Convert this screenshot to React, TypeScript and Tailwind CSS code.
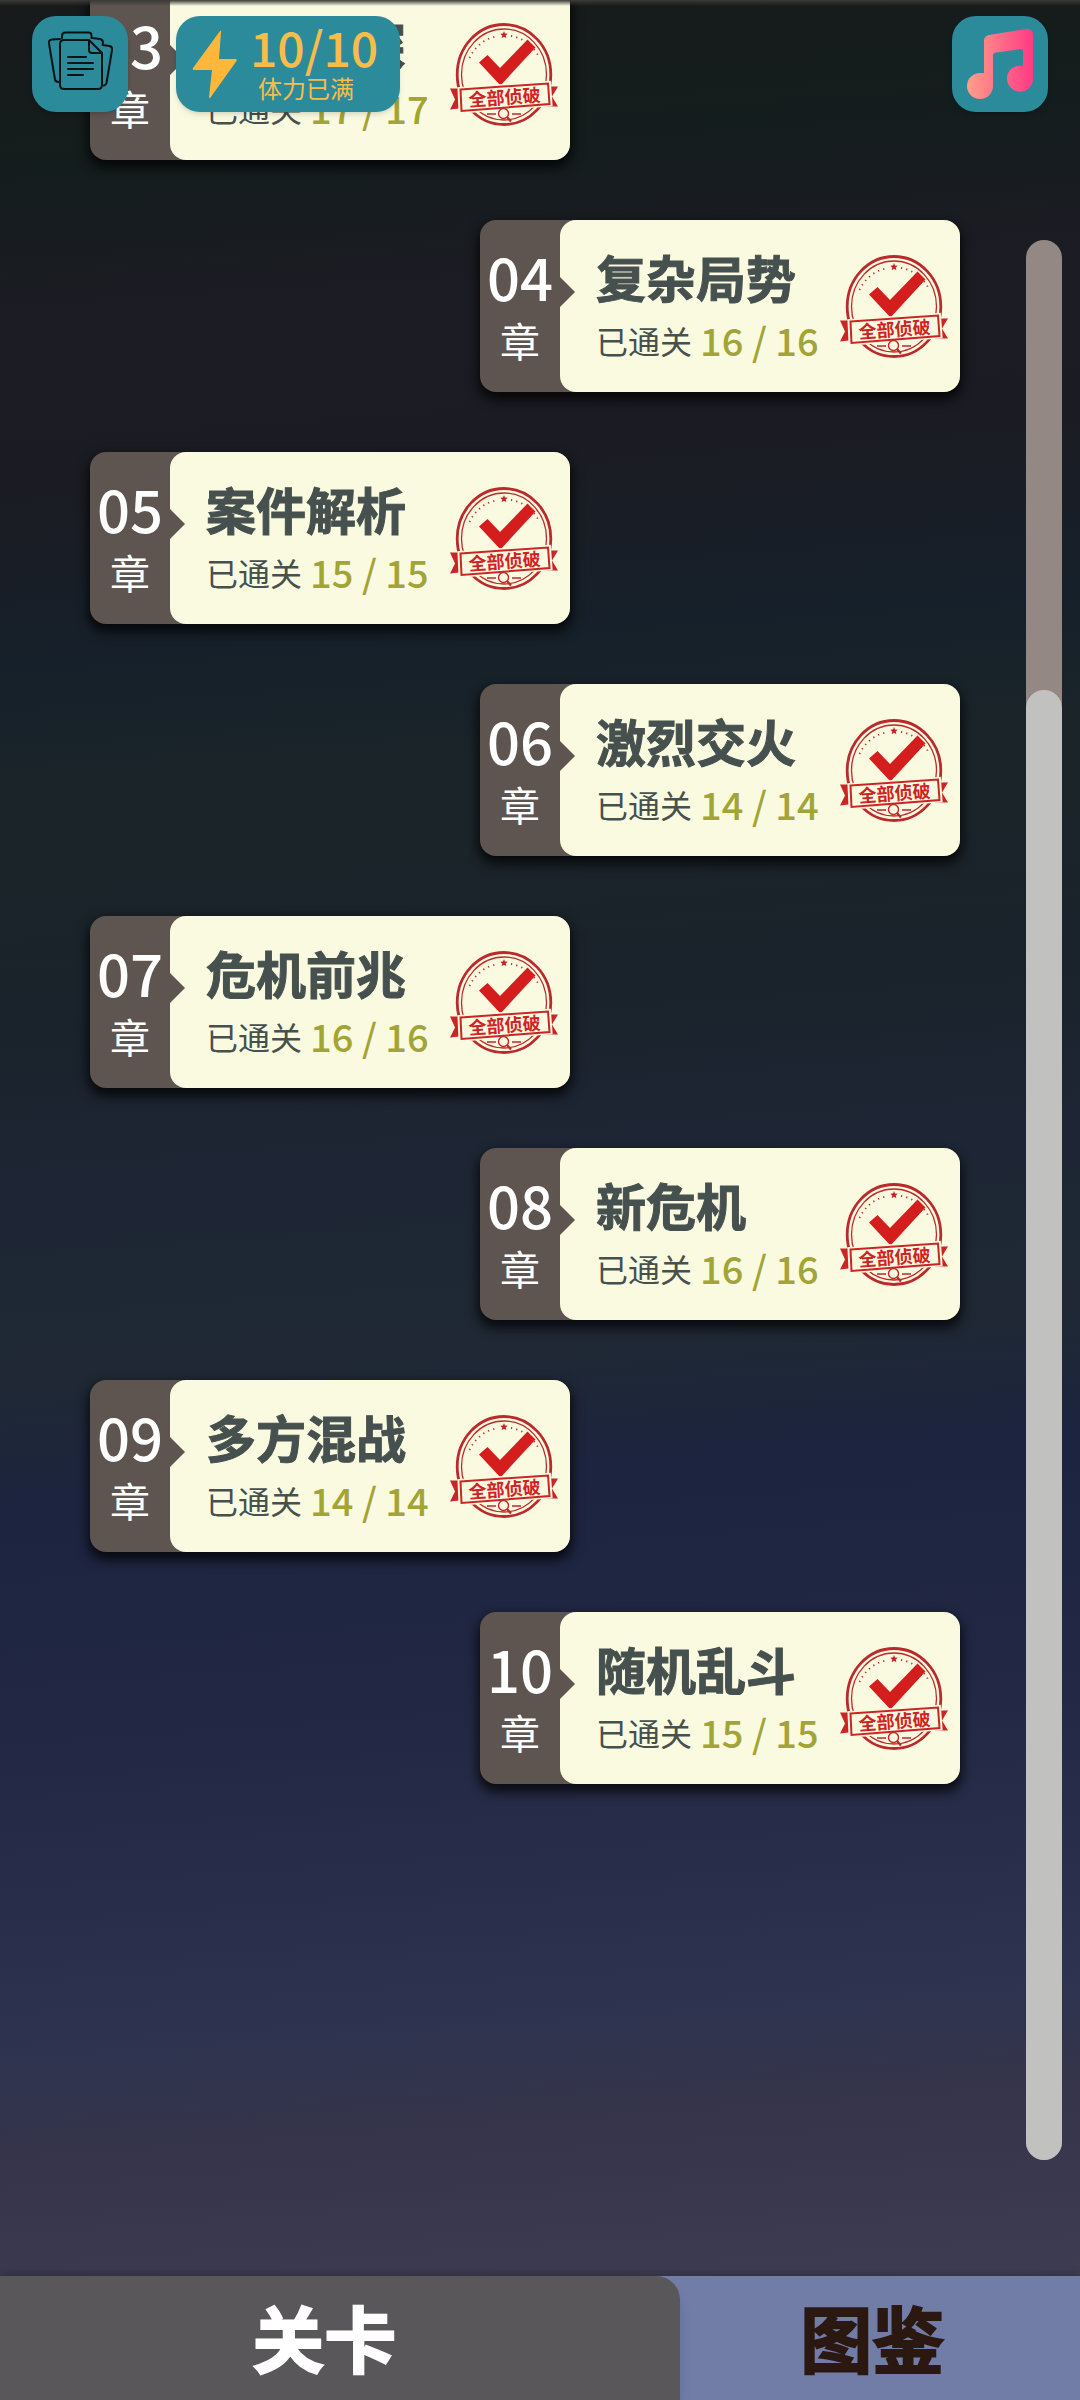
import React from "react";

type Chapter = { no: string; title: string; done: number; total: number };

const chapters: Chapter[] = [
  { no: "03", title: "迷雾渐深", done: 17, total: 17 },
  { no: "04", title: "复杂局势", done: 16, total: 16 },
  { no: "05", title: "案件解析", done: 15, total: 15 },
  { no: "06", title: "激烈交火", done: 14, total: 14 },
  { no: "07", title: "危机前兆", done: 16, total: 16 },
  { no: "08", title: "新危机", done: 16, total: 16 },
  { no: "09", title: "多方混战", done: 14, total: 14 },
  { no: "10", title: "随机乱斗", done: 15, total: 15 },
];

function Stamp() {
  return (
    <svg viewBox="0 0 108 104" className="h-[104px] w-[108px] shrink-0" role="img" aria-label="全部侦破">
      <g fill="none" stroke="#bb2a2b">
        <ellipse cx="54" cy="52.5" rx="46.8" ry="50" strokeWidth="2.8" />
        <ellipse cx="54" cy="52.5" rx="42.5" ry="45.5" strokeWidth="1.3" />
        <path d="M19.500 36A38 40 0 0 1 48 14" strokeWidth="1.800" strokeDasharray="1.200 4.200" />
        <path d="M61 14A38 40 0 0 1 89.500 36" strokeWidth="1.800" strokeDasharray="1.200 4.200" />
      </g>
      <path
        d="M54 9l1 2.500 2.800.2-2.100 1.800.7 2.700-2.400-1.500-2.400 1.500.7-2.700-2.100-1.800 2.800-.2z"
        fill="#c92020"
      />
      <path d="M29 40.500l8.500-7.500L50 46 77.500 17.500l8 8L50.500 63.500z" fill="#d41d1d" />
      <path d="M0 66.500h13V86L0 87.500l5-10zM95 64.500h13l-6 10 6 10H95z" fill="#c92525" />
      <path d="M10 67.500L98.500 61.500l1.500 20.500-89 7z" fill="#fafae1" stroke="#fafae1" strokeWidth="5" />
      <path d="M10.500 67.500L98 61.500l1.500 20.500-88 7z" fill="#fafae1" stroke="#c92525" strokeWidth="2" />
      <text
        x="54.500"
        y="82"
        textAnchor="middle"
        transform="rotate(-4 54 75)"
        fontSize="18"
        fontWeight="700"
        fill="#cf2323"
      >
        全部侦破
      </text>
      <g fill="none" stroke="#bb2a2b">
        <circle cx="53.500" cy="91.500" r="5" strokeWidth="1.400" fill="#fafae1" />
        <path d="M57 95l4 4.500" strokeWidth="2.200" />
        <path d="M37 92h9M62 92h9" strokeWidth="1.400" />
      </g>
    </svg>
  );
}

function ChapterCard({ chapter }: { chapter: Chapter }) {
  return (
    <button
      type="button"
      className="flex h-[172px] w-[480px] rounded-2xl bg-[#5e5450] text-left shadow-[0_6px_12px_2px_rgba(0,0,0,0.75)] odd:self-start even:self-end"
    >
      <span className="flex w-20 shrink-0 flex-col items-center pt-6 text-white">
        <span className="text-[58px] leading-[64px] font-medium">{chapter.no}</span>
        <span className="text-[40px] leading-[64px]">章</span>
      </span>
      <span className="relative flex min-w-0 flex-1 items-center justify-between rounded-2xl bg-[#fafae1] pr-3 pl-9">
        <svg viewBox="0 0 15 30" className="absolute top-[57px] left-0 h-[30px] w-[15px]" aria-hidden="true">
          <path d="M0 0l15 15L0 30z" fill="#5e5450" />
        </svg>
        <span className="flex flex-col pt-1 whitespace-nowrap text-[#46504e]">
          <span className="text-[50px] leading-[64px] font-bold [-webkit-text-stroke:1px_#46504e]">
            {chapter.title}
          </span>
          <span className="flex items-center gap-2">
            <span className="text-[32px] leading-[64px]">已通关</span>
            <span className="text-[38px] leading-[64px] font-medium text-[#a2a436]">
              {chapter.done} / {chapter.total}
            </span>
          </span>
        </span>
        <Stamp />
      </span>
    </button>
  );
}

function FilesIcon() {
  return (
    <svg
      viewBox="0 0 96 96"
      className="size-24"
      fill="none"
      stroke="#071214"
      strokeWidth="2"
      strokeLinejoin="round"
      strokeLinecap="round"
      aria-hidden="true"
    >
      <path d="M30 22v-2q0-3.500 3.500-3.500h23q3 0 3 3V22" />
      <path d="M28 23l-8 .5q-3.500.5-3 4l6 36q.5 2.500 4 2.500" />
      <path d="M60 22l8 1q3 .5 3 4l-.5 2 7 1q3 .5 2.500 4l-5.500 33q-.5 2-2.500 2.500" />
      <path d="M34 24h23l13 13v32q0 4-4 4H32q-4 0-4-4V28q0-4 4-4z" />
      <path d="M57 24v10q0 3 3 3h10" />
      <path d="M36 41h18M36 47h25M36 53h25M36 59h15" />
    </svg>
  );
}

function BoltIcon() {
  return (
    <svg viewBox="0 0 46 68" className="h-[68px] w-[46px] shrink-0" aria-hidden="true">
      <path d="M28 1L1 38q-1 2 1 2h18l-3 27q0 2 1.500.5L44.500 31q1-2-1-2H27L29 2q0-2-1-1z" fill="#ffb73b" />
    </svg>
  );
}

function MusicIcon() {
  return (
    <svg viewBox="0 0 96 96" className="size-24" aria-hidden="true">
      <defs>
        <linearGradient id="note" x1="15" x2="81" y1="0" y2="0" gradientUnits="userSpaceOnUse">
          <stop offset="0" stopColor="#ff9f8a" />
          <stop offset="1" stopColor="#ff3a86" />
        </linearGradient>
      </defs>
      <path
        d="M32 25q0-5 5-6l37-6q7-1 7 6v44a13 13 0 1 1-10-13V35q0-2-2-2l-25 3.500q-3 .5-3 3V70a13 13 0 1 1-13-13h4z"
        fill="url(#note)"
      />
    </svg>
  );
}

export default function App() {
  const visible = 1470;
  const hidden = 450;
  return (
    <div className="relative flex min-h-screen flex-col overflow-hidden bg-[linear-gradient(176deg,#181a1a_0%,#141d1d_7%,#1c1c24_13%,#1b1c23_20%,#16202a_27%,#1b2529_33%,#1a222b_42%,#1e2635_48%,#1f2834_56%,#1d2440_61%,#222844_70%,#282e49_77%,#2e3450_83%,#35344b_87%,#3b3a50_93%,#403f53_97%)] font-['Noto_Sans_CJK_SC',sans-serif]">
      <header className="absolute inset-x-0 top-0 z-10 flex items-start bg-[linear-gradient(#3a3a36,transparent_6px)] px-8 pt-4">
        <button type="button" aria-label="档案" className="rounded-3xl bg-[#2b8b9b] shadow-md">
          <FilesIcon />
        </button>
        <div className="ml-12 flex h-24 w-56 items-center gap-3 rounded-3xl bg-[#2b8b9b] pl-4 text-[#f7bd4b] shadow-md">
          <BoltIcon />
          <div className="flex flex-col items-start pb-2">
            <span className="text-5xl leading-[56px] font-medium">10/10</span>
            <span className="pl-2 text-2xl leading-7">体力已满</span>
          </div>
        </div>
        <button type="button" aria-label="音乐" className="ml-auto rounded-3xl bg-[#2b8b9b] shadow-md">
          <MusicIcon />
        </button>
      </header>

      <main className="flex flex-1">
        <div className="-mt-3 flex flex-1 flex-col gap-[60px] pr-[66px] pb-16 pl-[90px]">
          {chapters.map((c) => (
            <ChapterCard key={c.no} chapter={c} />
          ))}
        </div>
        <div className="mt-60 mr-[18px] mb-[116px] flex w-9 flex-col rounded-full bg-[#938884]">
          <div style={{ flexGrow: hidden }} />
          <div className="rounded-full bg-[#c1c1bf]" style={{ flexGrow: visible }} />
        </div>
      </main>

      <nav className="flex h-[124px] bg-[#717ca7] pb-0 text-7xl font-bold shadow-[0_-2px_8px_rgba(0,0,0,0.2)]">
        <button
          type="button"
          className="w-[63%] rounded-tr-3xl bg-[#5a575a] pr-8 pb-1 text-white shadow-lg [-webkit-text-stroke:2px_#ffffff]"
        >
          关卡
        </button>
        <button type="button" className="flex-1 pr-4 pb-1 text-[#2a1811] [-webkit-text-stroke:2px_#2a1811]">
          图鉴
        </button>
      </nav>
    </div>
  );
}
